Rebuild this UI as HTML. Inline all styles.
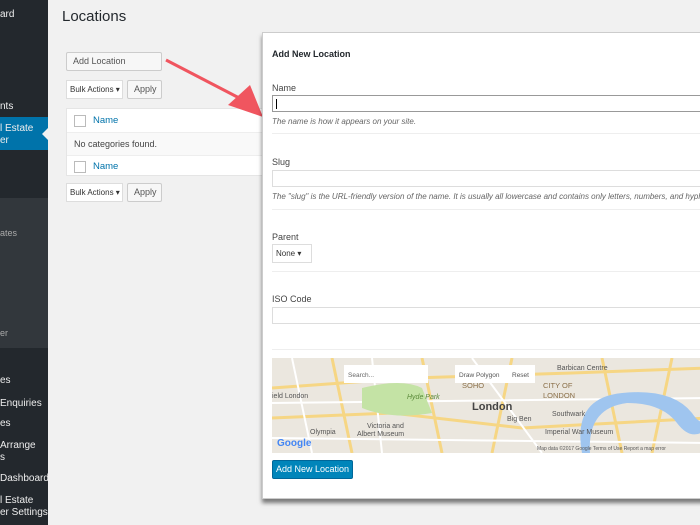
<!DOCTYPE html>
<html><head><style>
body{margin:0;width:700px;height:525px;background:#f1f1f1;font-family:"Liberation Sans",sans-serif;position:relative;overflow:hidden;font-size:11px;color:#444}
.sb{position:absolute;left:0;top:0;width:48px;height:525px;background:#23282d;color:#eee;overflow:hidden}
.sb div{position:absolute;white-space:nowrap;font-size:10px}
.sub{position:absolute;left:0;top:198px;width:48px;height:150px;background:#32373c}
.act{position:absolute;left:0;top:117px;width:48px;height:33px;background:#0073aa}
.btn{position:absolute;background:#f7f7f7;border:1px solid #ccc;border-radius:2px;font-size:9px;color:#555;box-sizing:border-box;padding-left:6px;line-height:17px;white-space:nowrap}
.sel{position:absolute;background:#fff;border:1px solid #ddd;font-size:8px;color:#333;box-sizing:border-box;padding-left:3px;line-height:17px;white-space:nowrap;overflow:hidden}
.tbl{position:absolute;left:66px;width:200px;background:#fff;border:1px solid #e5e5e5;box-sizing:border-box}
.cb{position:absolute;width:10px;height:10px;border:1px solid #bbb;background:#fff}
a{color:#0073aa;text-decoration:none}
.panel{position:absolute;left:262px;top:32px;width:445px;height:465px;background:#fff;border:1px solid #ccc;box-shadow:0 4px 4px rgba(0,0,0,.5)}
.p{position:absolute;left:9px;white-space:nowrap}
.inp{position:absolute;left:9px;width:430px;height:17px;border:1px solid #ddd;box-sizing:border-box}
.hr{position:absolute;left:9px;width:430px;border-top:1px solid #eee}
i{font-size:8px;color:#666}
</style></head><body>
<div class="sb">
<div class="sub"></div><div class="act"></div>
<div style="left:0;top:9px">ard</div>
<div style="left:0;top:101px">nts</div>
<div style="left:0;top:123px">l Estate</div>
<div style="left:0;top:135px">er</div>
<div style="left:0;top:228px;color:#aaa;font-size:9px">ates</div>
<div style="left:0;top:328px;color:#aaa;font-size:9px">er</div>
<div style="left:0;top:375px">es</div>
<div style="left:0;top:398px">Enquiries</div>
<div style="left:0;top:418px">es</div>
<div style="left:0;top:440px">Arrange</div>
<div style="left:0;top:452px">s</div>
<div style="left:0;top:473px">Dashboard</div>
<div style="left:0;top:495px">l Estate</div>
<div style="left:0;top:507px">er Settings</div>
<div style="top:128px;left:36px;width:0;height:0;border:6px solid transparent;border-right-color:#f1f1f1"></div>
</div>
<div style="position:absolute;left:62px;top:8px;font-size:15px;color:#23282d">Locations</div>
<div class="btn" style="left:66px;top:52px;width:96px;height:19px;background:#f7f7f7">Add Location</div>
<div class="sel" style="left:66px;top:80px;width:57px;height:19px">Bulk Actions ▾</div>
<div class="btn" style="left:127px;top:80px;width:35px;height:19px">Apply</div>
<div class="tbl" style="top:108px;height:68px">
<div style="position:absolute;left:0;top:23px;right:0;height:22px;background:#f9f9f9;border-top:1px solid #eee;border-bottom:1px solid #eee"></div>
<div class="cb" style="left:7px;top:6px"></div><a style="position:absolute;left:26px;top:6px;font-size:9.5px">Name</a>
<div style="position:absolute;left:7px;top:30px;font-size:9px">No categories found.</div>
<div class="cb" style="left:7px;top:52px"></div><a style="position:absolute;left:26px;top:52px;font-size:9.5px">Name</a>
</div>
<div class="sel" style="left:66px;top:183px;width:57px;height:19px">Bulk Actions ▾</div>
<div class="btn" style="left:127px;top:183px;width:35px;height:19px">Apply</div>
<svg style="position:absolute;left:160px;top:55px" width="110" height="70"><path d="M6 5 L85 46" stroke="#f0555f" stroke-width="3"/><path d="M68 50 L103 62 L90 30 Z" fill="#f0555f"/></svg>
<div class="panel">
<div class="p" style="top:16px;font-weight:bold;font-size:9px;color:#23282d">Add New Location</div>
<div class="p" style="top:50px;font-size:9px">Name</div>
<div class="inp" style="top:62px;border-color:#999"><div style="position:absolute;left:3px;top:3px;width:1px;height:10px;background:#000"></div></div>
<div class="p" style="top:82px"><i>The name is how it appears on your site.</i></div>
<div class="hr" style="top:100px"></div>
<div class="p" style="top:124px;font-size:9px">Slug</div>
<div class="inp" style="top:137px"></div>
<div class="p" style="top:157px"><i>The "slug" is the URL-friendly version of the name. It is usually all lowercase and contains only letters, numbers, and hyphens.</i></div>
<div class="hr" style="top:176px"></div>
<div class="p" style="top:199px;font-size:9px">Parent</div>
<div class="sel" style="left:9px;top:211px;width:40px;height:19px">None ▾</div>
<div class="hr" style="top:238px"></div>
<div class="p" style="top:261px;font-size:9px">ISO Code</div>
<div class="inp" style="top:274px"></div>
<div class="hr" style="top:316px"></div>
<svg style="position:absolute;left:9px;top:325px" width="436" height="95" font-family="Liberation Sans">
<rect width="436" height="95" fill="#ebe7df"/>
<path d="M0 30 L140 20 L300 15 L436 10 M0 60 L120 55 L250 70 L436 60 M60 0 L80 95 M150 0 L170 95 M240 0 L220 95 M330 0 L350 95 M400 0 L380 95" stroke="#f6d684" stroke-width="3" fill="none"/>
<path d="M20 0 L40 95 M100 0 L110 95 M0 80 L436 85 M0 45 L436 40 M200 0 L270 95" stroke="#fff" stroke-width="2" fill="none"/>
<path d="M90 30 Q130 20 150 30 L160 55 Q120 62 90 50 Z" fill="#c4e3a5"/>
<path d="M310 95 Q300 40 350 35 Q400 30 420 55 Q430 70 436 60 L436 70 Q420 85 405 65 Q390 45 355 45 Q315 50 318 95 Z" fill="#9fc5ef"/>
<rect x="72" y="7" width="84" height="18" fill="#fff"/><text x="76" y="19" font-size="6.5" fill="#666">Search...</text>
<rect x="183" y="7" width="80" height="18" fill="#fff"/><text x="187" y="19" font-size="6.5" fill="#555">Draw Polygon</text><text x="240" y="19" font-size="6.5" fill="#555">Reset</text>
<text x="200" y="52" font-size="11" font-weight="bold" fill="#444">London</text>
<text x="190" y="30" font-size="7.5" fill="#8a6f48">SOHO</text>
<text x="271" y="30" font-size="7.5" fill="#8a6f48">CITY OF</text><text x="271" y="40" font-size="7.5" fill="#8a6f48">LONDON</text>
<text x="285" y="12" font-size="7" fill="#555">Barbican Centre</text>
<text x="135" y="41" font-size="7" fill="#5a8a3a" font-style="italic">Hyde Park</text>
<text x="0" y="40" font-size="7" fill="#555">ield London</text>
<text x="280" y="58" font-size="7" fill="#555">Southwark</text>
<text x="235" y="63" font-size="7" fill="#555">Big Ben</text>
<text x="95" y="70" font-size="7" fill="#555">Victoria and</text><text x="85" y="78" font-size="7" fill="#555">Albert Museum</text>
<text x="38" y="76" font-size="7" fill="#555">Olympia</text>
<text x="273" y="76" font-size="7" fill="#555">Imperial War Museum</text>
<text x="5" y="88" font-size="10" font-weight="bold" fill="#4285f4">Google</text>
<text x="265" y="92" font-size="5" fill="#555">Map data ©2017 Google   Terms of Use   Report a map error</text>
</svg>
<div style="position:absolute;left:9px;top:427px;width:81px;height:19px;background:#0085ba;border:1px solid #006799;border-radius:2px;box-sizing:border-box;color:#fff;font-size:9px;line-height:17px;text-align:center">Add New Location</div>
</div>
</body></html>
